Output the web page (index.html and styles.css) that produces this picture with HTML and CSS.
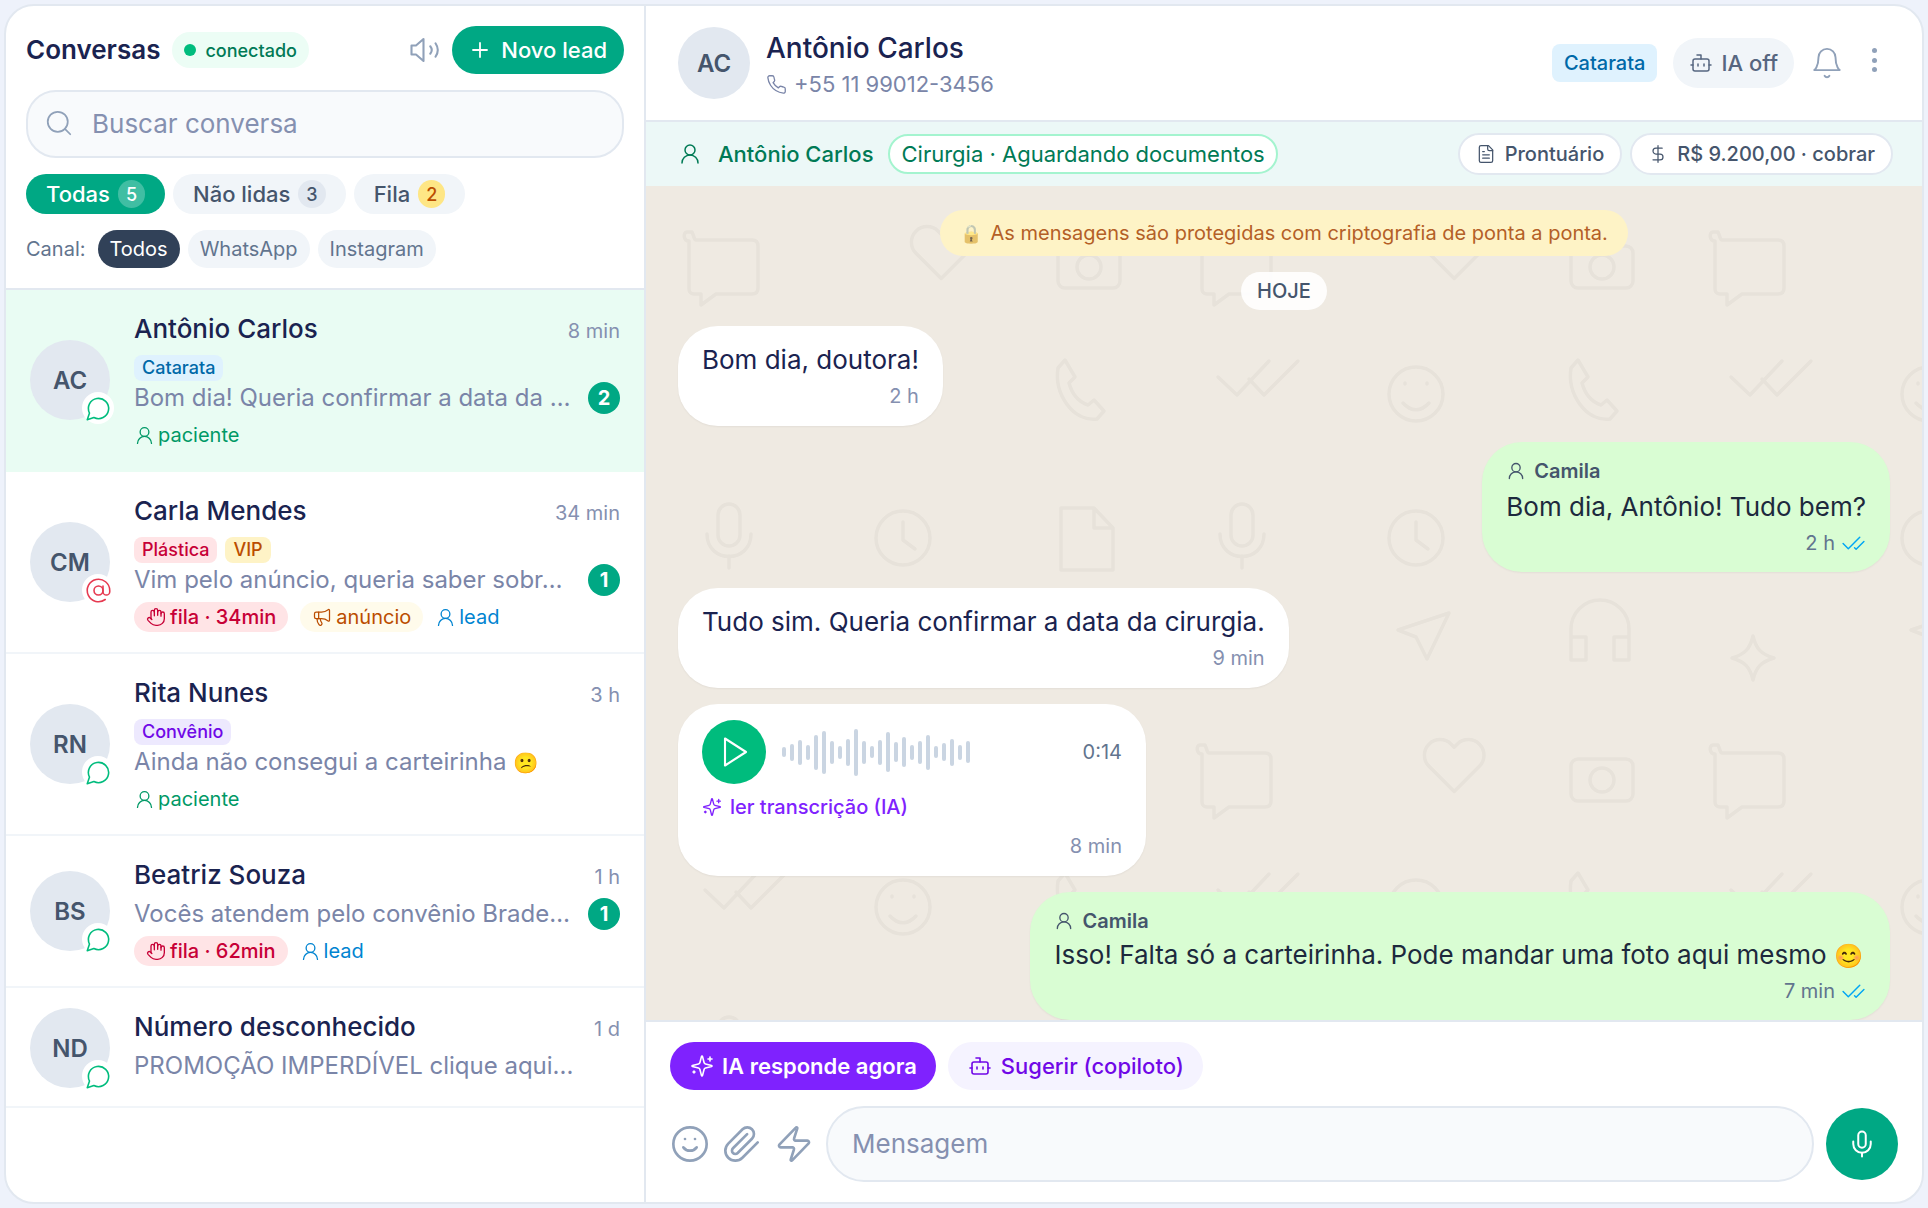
FILE: index.html
```html
<!DOCTYPE html>
<html lang="pt-BR">
<head>
<meta charset="utf-8">
<title>Conversas</title>
<link rel="stylesheet" href="styles.css">
</head>
<body>
<svg class="defs" width="0" height="0" aria-hidden="true">
  <defs>
    <symbol id="i-volume" viewBox="0 0 24 24"><path d="M11 4.7 6 9H3v6h3l5 4.3z"/><path d="M15.5 9.5a4 4 0 0 1 0 5"/><path d="M19 7.5a8 8 0 0 1 0 9"/></symbol>
    <symbol id="i-plus" viewBox="0 0 24 24"><path d="M5 12h14"/><path d="M12 5v14"/></symbol>
    <symbol id="i-search" viewBox="0 0 24 24"><circle cx="11" cy="11" r="8"/><path d="m21 21-4.3-4.3"/></symbol>
    <symbol id="i-msg" viewBox="0 0 24 24"><path d="M7.9 20A9 9 0 1 0 4 16.1L2 22Z"/></symbol>
    <symbol id="i-at" viewBox="0 0 24 24"><circle cx="12" cy="12" r="4"/><path d="M16 8v5a3 3 0 0 0 6 0v-1a10 10 0 1 0-4 8"/></symbol>
    <symbol id="i-user" viewBox="0 0 24 24"><circle cx="12" cy="8" r="5"/><path d="M20 21a8 8 0 0 0-16 0"/></symbol>
    <symbol id="i-hand" viewBox="0 0 24 24"><path d="M18 11V6a2 2 0 0 0-2-2a2 2 0 0 0-2 2"/><path d="M14 10V4a2 2 0 0 0-2-2a2 2 0 0 0-2 2v2"/><path d="M10 10.5V6a2 2 0 0 0-2-2a2 2 0 0 0-2 2v8"/><path d="M18 8a2 2 0 1 1 4 0v6a8 8 0 0 1-8 8h-2c-2.8 0-4.5-.86-5.99-2.34l-3.6-3.6a2 2 0 0 1 2.83-2.82L7 15"/></symbol>
    <symbol id="i-mega" viewBox="0 0 24 24"><path d="M11 6a13 13 0 0 0 8.4-2.8A1 1 0 0 1 21 4v12a1 1 0 0 1-1.6.8A13 13 0 0 0 11 14H5a2 2 0 0 1-2-2V8a2 2 0 0 1 2-2z"/><path d="M6 14a12 12 0 0 0 2.4 7.2 2 2 0 0 0 3.2-2.4A8 8 0 0 1 10 14"/><path d="M8 6v8"/></symbol>
    <symbol id="i-phone" viewBox="0 0 24 24"><path d="M22 16.92v3a2 2 0 0 1-2.18 2 19.79 19.79 0 0 1-8.63-3.07 19.5 19.5 0 0 1-6-6 19.79 19.79 0 0 1-3.07-8.67A2 2 0 0 1 4.11 2h3a2 2 0 0 1 2 1.72 12.84 12.84 0 0 0 .7 2.81 2 2 0 0 1-.45 2.11L8.09 9.91a16 16 0 0 0 6 6l1.27-1.27a2 2 0 0 1 2.11-.45 12.84 12.84 0 0 0 2.81.7A2 2 0 0 1 22 16.92z"/></symbol>
    <symbol id="i-bot" viewBox="0 0 24 24"><path d="M12 8V4H8"/><rect width="16" height="12" x="4" y="8" rx="2"/><path d="M2 14h2"/><path d="M20 14h2"/><path d="M15 13v2"/><path d="M9 13v2"/></symbol>
    <symbol id="i-bell" viewBox="0 0 24 24"><path d="M6 8a6 6 0 0 1 12 0c0 7 3 9 3 9H3s3-2 3-9"/><path d="M10.3 21a1.94 1.94 0 0 0 3.4 0"/></symbol>
    <symbol id="i-file" viewBox="0 0 24 24"><path d="M15 2H6a2 2 0 0 0-2 2v16a2 2 0 0 0 2 2h12a2 2 0 0 0 2-2V7Z"/><path d="M14 2v4a2 2 0 0 0 2 2h4"/><path d="M10 9H8"/><path d="M16 13H8"/><path d="M16 17H8"/></symbol>
    <symbol id="i-dollar" viewBox="0 0 24 24"><path d="M12 2v20"/><path d="M17 5H9.5a3.5 3.5 0 0 0 0 7h5a3.5 3.5 0 0 1 0 7H6"/></symbol>
    <symbol id="i-checks" viewBox="0 0 24 24"><path d="M18 6 7 17l-5-5"/><path d="m22 10-7.5 7.5L13 16"/></symbol>
    <symbol id="i-play" viewBox="0 0 24 24"><path d="M6 3l14 9-14 9z"/></symbol>
    <symbol id="i-sparkles" viewBox="0 0 24 24"><path d="M9.937 15.5A2 2 0 0 0 8.5 14.063l-6.135-1.582a.5.5 0 0 1 0-.962L8.5 9.936A2 2 0 0 0 9.937 8.5l1.582-6.135a.5.5 0 0 1 .963 0L14.063 8.5A2 2 0 0 0 15.5 9.937l6.135 1.581a.5.5 0 0 1 0 .964L15.5 14.063a2 2 0 0 0-1.437 1.437l-1.582 6.135a.5.5 0 0 1-.963 0z"/><path d="M20 3v4"/><path d="M22 5h-4"/><path d="M4 17v2"/><path d="M5 18H3"/></symbol>
    <symbol id="i-smile" viewBox="0 0 24 24"><circle cx="12" cy="12" r="10"/><path d="M8 14s1.5 2 4 2 4-2 4-2"/><path d="M9 9h.01"/><path d="M15 9h.01"/></symbol>
    <symbol id="i-clip" viewBox="0 0 24 24"><path d="m21.44 11.05-9.19 9.19a6 6 0 0 1-8.49-8.49l8.57-8.57A4 4 0 1 1 18 8.84l-8.59 8.57a2 2 0 0 1-2.83-2.83l8.49-8.48"/></symbol>
    <symbol id="i-zap" viewBox="0 0 24 24"><path d="M4 14a1 1 0 0 1-.78-1.63l9.9-10.2a.5.5 0 0 1 .86.46l-1.92 6.02A1 1 0 0 0 13 10h7a1 1 0 0 1 .78 1.63l-9.9 10.2a.5.5 0 0 1-.86-.46l1.92-6.02A1 1 0 0 0 11 14z"/></symbol>
    <symbol id="i-mic" viewBox="0 0 24 24"><path d="M12 2a3 3 0 0 0-3 3v7a3 3 0 0 0 6 0V5a3 3 0 0 0-3-3z"/><path d="M19 10v2a7 7 0 0 1-14 0v-2"/><path d="M12 19v3"/></symbol>
  </defs>
</svg>

<div class="app">
  <aside class="sidebar">
    <div class="side-head">
      <div class="title-row">
        <h1 class="title">Conversas</h1>
        <span class="online"><i class="dot"></i>conectado</span>
        <svg class="ico ico-vol"><use href="#i-volume"/></svg>
        <button class="new-lead"><svg class="ico ico-plus"><use href="#i-plus"/></svg>Novo lead</button>
      </div>
      <div class="search"><svg class="ico ico-search"><use href="#i-search"/></svg><span>Buscar conversa</span></div>
      <div class="tabs">
        <span class="tab tab-on">Todas <b class="count count-on">5</b></span>
        <span class="tab">Não lidas <b class="count">3</b></span>
        <span class="tab">Fila <b class="count count-warn">2</b></span>
      </div>
      <div class="channels">
        <span class="ch-label">Canal:</span>
        <span class="ch ch-on">Todos</span>
        <span class="ch">WhatsApp</span>
        <span class="ch">Instagram</span>
      </div>
    </div>

    <div class="conv conv-on">
      <div class="av">AC<span class="chan chan-wa"><svg class="ico"><use href="#i-msg"/></svg></span></div>
      <div class="conv-body">
        <div class="conv-top"><span class="name">Antônio Carlos</span><span class="time">8 min</span></div>
        <div class="tags"><span class="tag tag-sky">Catarata</span></div>
        <div class="prev-row"><span class="prev">Bom dia! Queria confirmar a data da …</span><span class="unread">2</span></div>
        <div class="meta"><span class="who who-pac"><svg class="ico"><use href="#i-user"/></svg>paciente</span></div>
      </div>
    </div>

    <div class="conv">
      <div class="av">CM<span class="chan chan-ig"><svg class="ico"><use href="#i-at"/></svg></span></div>
      <div class="conv-body">
        <div class="conv-top"><span class="name">Carla Mendes</span><span class="time">34 min</span></div>
        <div class="tags"><span class="tag tag-rose">Plástica</span><span class="tag tag-amber">VIP</span></div>
        <div class="prev-row"><span class="prev">Vim pelo anúncio, queria saber sobr…</span><span class="unread">1</span></div>
        <div class="meta">
          <span class="pill pill-rose"><svg class="ico"><use href="#i-hand"/></svg>fila · 34min</span>
          <span class="pill pill-amber"><svg class="ico ico-mega"><use href="#i-mega"/></svg>anúncio</span>
          <span class="who who-lead"><svg class="ico"><use href="#i-user"/></svg>lead</span>
        </div>
      </div>
    </div>

    <div class="conv">
      <div class="av">RN<span class="chan chan-wa"><svg class="ico"><use href="#i-msg"/></svg></span></div>
      <div class="conv-body">
        <div class="conv-top"><span class="name">Rita Nunes</span><span class="time">3 h</span></div>
        <div class="tags"><span class="tag tag-violet">Convênio</span></div>
        <div class="prev-row"><span class="prev">Ainda não consegui a carteirinha <span class="emoji">😕</span></span></div>
        <div class="meta"><span class="who who-pac"><svg class="ico"><use href="#i-user"/></svg>paciente</span></div>
      </div>
    </div>

    <div class="conv">
      <div class="av">BS<span class="chan chan-wa"><svg class="ico"><use href="#i-msg"/></svg></span></div>
      <div class="conv-body">
        <div class="conv-top"><span class="name">Beatriz Souza</span><span class="time">1 h</span></div>
        <div class="prev-row"><span class="prev">Vocês atendem pelo convênio Brade…</span><span class="unread">1</span></div>
        <div class="meta">
          <span class="pill pill-rose"><svg class="ico"><use href="#i-hand"/></svg>fila · 62min</span>
          <span class="who who-lead"><svg class="ico"><use href="#i-user"/></svg>lead</span>
        </div>
      </div>
    </div>

    <div class="conv">
      <div class="av">ND<span class="chan chan-wa"><svg class="ico"><use href="#i-msg"/></svg></span></div>
      <div class="conv-body">
        <div class="conv-top"><span class="name">Número desconhecido</span><span class="time">1 d</span></div>
        <div class="prev-row"><span class="prev">PROMOÇÃO IMPERDÍVEL clique aqui...</span></div>
      </div>
    </div>
  </aside>

  <main class="main">
    <header class="chat-head">
      <div class="av av-head">AC</div>
      <div class="head-info">
        <div class="head-name">Antônio Carlos</div>
        <div class="head-phone"><svg class="ico"><use href="#i-phone"/></svg>+55 11 99012-3456</div>
      </div>
      <span class="head-tag">Catarata</span>
      <span class="ia-off"><svg class="ico"><use href="#i-bot"/></svg>IA off</span>
      <svg class="ico ico-bell"><use href="#i-bell"/></svg>
      <span class="kebab"><i></i><i></i><i></i></span>
    </header>

    <div class="banner">
      <svg class="ico ico-banner"><use href="#i-user"/></svg>
      <span class="ban-name">Antônio Carlos</span>
      <span class="ban-stage">Cirurgia · Aguardando documentos</span>
      <span class="ban-btn ban-first"><svg class="ico"><use href="#i-file"/></svg>Prontuário</span>
      <span class="ban-btn"><svg class="ico"><use href="#i-dollar"/></svg>R$ 9.200,00 · cobrar</span>
    </div>

    <section class="chat">
      <div class="notice"><span class="lock">🔒</span>As mensagens são protegidas com criptografia de ponta a ponta.</div>
      <div class="day">HOJE</div>

      <div class="msg msg-in">
        <div class="msg-text">Bom dia, doutora!</div>
        <div class="msg-time">2 h</div>
      </div>

      <div class="msg msg-out">
        <div class="msg-from"><svg class="ico"><use href="#i-user"/></svg>Camila</div>
        <div class="msg-text">Bom dia, Antônio! Tudo bem?</div>
        <div class="msg-time">2 h<svg class="ico ico-checks"><use href="#i-checks"/></svg></div>
      </div>

      <div class="msg msg-in">
        <div class="msg-text">Tudo sim. Queria confirmar a data da cirurgia.</div>
        <div class="msg-time">9 min</div>
      </div>

      <div class="msg msg-in msg-audio">
        <div class="audio">
          <span class="play"><svg class="ico"><use href="#i-play"/></svg></span>
          <div class="wave">
            <i style="height:10px"></i><i style="height:17px"></i><i style="height:25px"></i><i style="height:15px"></i><i style="height:35px"></i><i style="height:43px"></i><i style="height:23px"></i><i style="height:13px"></i><i style="height:27px"></i><i style="height:47px"></i><i style="height:23px"></i><i style="height:12px"></i><i style="height:25px"></i><i style="height:40px"></i><i style="height:20px"></i><i style="height:30px"></i><i style="height:15px"></i><i style="height:23px"></i><i style="height:35px"></i><i style="height:12px"></i><i style="height:18px"></i><i style="height:27px"></i><i style="height:15px"></i><i style="height:22px"></i>
          </div>
          <span class="dur">0:14</span>
        </div>
        <div class="transcr"><svg class="ico"><use href="#i-sparkles"/></svg>ler transcrição (IA)</div>
        <div class="msg-time">8 min</div>
      </div>

      <div class="msg msg-out msg-tight">
        <div class="msg-from"><svg class="ico"><use href="#i-user"/></svg>Camila</div>
        <div class="msg-text">Isso! Falta só a carteirinha. Pode mandar uma foto aqui mesmo <span class="emoji">😊</span></div>
        <div class="msg-time">7 min<svg class="ico ico-checks"><use href="#i-checks"/></svg></div>
      </div>
    </section>

    <footer class="composer">
      <div class="ai-row">
        <button class="ai-now"><svg class="ico"><use href="#i-sparkles"/></svg>IA responde agora</button>
        <button class="ai-sug"><svg class="ico"><use href="#i-bot"/></svg>Sugerir (copiloto)</button>
      </div>
      <div class="input-row">
        <svg class="ico ico-tool"><use href="#i-smile"/></svg>
        <svg class="ico ico-tool"><use href="#i-clip"/></svg>
        <svg class="ico ico-tool"><use href="#i-zap"/></svg>
        <div class="input">Mensagem</div>
        <span class="send"><svg class="ico"><use href="#i-mic"/></svg></span>
      </div>
    </footer>
  </main>
</div>
</body>
</html>
```
FILE: styles.css
```css
* { box-sizing: border-box; }
html, body { margin: 0; height: 100%; }
body {
  background: #eef2fb;
  padding: 4px;
  font-family: Inter, "Noto Sans", "Noto Color Emoji", sans-serif;
  color: #1a2350;
}
.defs { position: absolute; }
.ico {
  display: block;
  flex: none;
  fill: none;
  stroke: currentColor;
  stroke-width: 2;
  stroke-linecap: round;
  stroke-linejoin: round;
}
button { font: inherit; border: 0; }
.emoji { font-size: .85em; line-height: 1; filter: sepia(.2) saturate(1.3); }
.msg-text .emoji { font-size: .9em; margin-right: 3px; }

.app {
  display: flex;
  width: 1920px;
  height: 1200px;
  background: #fff;
  border: 2px solid #e2e8f0;
  border-radius: 30px;
  overflow: hidden;
}

/* Sidebar */
.sidebar { width: 640px; flex: none; border-right: 2px solid #e2e8f0; }
.side-head { padding: 20px 20px 20px; border-bottom: 2px solid #e2e8f0; height: 284px; }
.title-row { display: flex; align-items: center; height: 48px; }
.title { margin: 0; font-size: 26px; font-weight: 600; line-height: 1; }
.online {
  display: flex; align-items: center; gap: 9px;
  height: 36px; padding: 0 12px; margin-left: 12px;
  background: #ecfdf5; color: #007a55;
  border-radius: 18px; font-size: 18px; font-weight: 500;
}
.dot { width: 12px; height: 12px; border-radius: 50%; background: #00bc7d; }
.ico-vol { width: 36px; height: 36px; margin-left: auto; margin-right: 9px; color: #90a1b9; stroke-width: 1.4; }
.new-lead {
  display: flex; align-items: center; gap: 9px;
  height: 48px; padding: 0 17px 0 16px;
  background: #00a884; color: #fff;
  border-radius: 24px; font-size: 22px; font-weight: 500;
}
.ico-plus { width: 24px; height: 24px; stroke-width: 1.8; }
.search {
  display: flex; align-items: center; gap: 18px;
  height: 68px; margin-top: 16px; padding: 0 16px 2px;
  background: #f8fafc; border: 2px solid #e2e8f0; border-radius: 30px;
  font-size: 26px; color: #8590b0;
}
.ico-search { width: 30px; height: 30px; color: #90a1b9; stroke-width: 1.4; }
.tabs { display: flex; gap: 8px; margin-top: 16px; }
.tab {
  display: flex; align-items: center; gap: 8px;
  height: 40px; padding: 0 20px;
  background: #f1f5f9; color: #45556c;
  border-radius: 20px; font-size: 22px; font-weight: 500;
}
.tab-on { background: #00a884; color: #fff; }
.count {
  display: flex; align-items: center; justify-content: center;
  height: 28px; padding: 0 8px; border-radius: 14px;
  background: #e2e8f0; color: #45556c;
  font-size: 18px; font-weight: 500;
}
.count-on { background: rgba(255,255,255,.25); color: #fff; }
.count-warn { background: #fee685; color: #bb4d00; }
.channels { display: flex; align-items: center; gap: 8px; margin-top: 16px; }
.ch-label { font-size: 20px; color: #62748e; margin-right: 4px; }
.ch {
  display: flex; align-items: center;
  height: 38px; padding: 0 12px;
  background: #f1f5f9; color: #62748e;
  border-radius: 19px; font-size: 20px;
}
.ch-on { background: #314158; color: #fff; }

/* Conversation rows */
.conv {
  display: flex; align-items: flex-start; gap: 24px;
  padding: 20px 24px 20px 24px;
  border-bottom: 2px solid #f1f5f9;
}
.conv:last-child { padding-bottom: 18px; }
.conv-on { background: #e9fcf3; border-bottom-color: #e9fcf3; }
.av {
  position: relative; flex: none; align-self: center;
  display: flex; align-items: center; justify-content: center;
  width: 80px; height: 80px; border-radius: 50%;
  background: #e2e8f0; color: #45556c;
  font-size: 24px; font-weight: 600;
}
.chan {
  position: absolute; right: -4px; bottom: -4px;
  display: flex; align-items: center; justify-content: center;
  width: 32px; height: 32px; border-radius: 50%; background: #fff;
}
.chan .ico { width: 27px; height: 27px; stroke-width: 1.4; }
.chan-wa { color: #00bc7d; }
.chan-ig { color: #e63950; }
.conv-body { flex: 1; min-width: 0; margin-top: -1px; }
.conv-top { display: flex; justify-content: space-between; align-items: center; height: 38px; }
.name { font-size: 26px; font-weight: 500; color: #1a2350; }
.time { font-size: 20px; color: #8590b0; padding-top: 6px; }
.tags { display: flex; gap: 8px; margin-top: 8px; }
.tag { display: block; height: 26px; line-height: 26px; padding: 0 8px; border-radius: 8px; font-size: 18px; font-weight: 500; }
.tag-sky { background: #dff2fe; color: #0069a8; }
.tag-rose { background: #ffe4e6; color: #c70036; }
.tag-amber { background: #fef3c6; color: #bb4d00; }
.tag-violet { background: #ede9fe; color: #7008e7; }
.prev-row { display: flex; align-items: center; justify-content: space-between; height: 36px; margin-top: -2px; }
.conv-top + .prev-row { margin-top: 2px; }
.prev { white-space: nowrap; font-size: 24px; color: #7a85a8; }
.unread {
  display: flex; align-items: center; justify-content: center; flex: none;
  width: 32px; height: 32px; margin-top: 2px; border-radius: 50%;
  background: #00a884; color: #fff; font-size: 20px; font-weight: 700;
}
.meta { display: flex; align-items: center; gap: 12px; height: 30px; margin-top: 5px; font-size: 20px; }
.who { display: flex; align-items: center; gap: 3px; }
.who .ico { width: 21px; height: 21px; stroke-width: 1.5; }
.who-pac { color: #009966; }
.who-lead { color: #0084d1; }
.pill { display: flex; align-items: center; gap: 4px; height: 30px; padding: 0 12px; border-radius: 15px; font-weight: 500; }
.pill .ico { width: 20px; height: 20px; stroke-width: 1.6; }
.pill-rose { background: #ffe4e6; color: #c70036; }
.pill-amber { background: #fffbeb; color: #bb4d00; font-weight: 400; }
.pill .ico-mega { width: 20px; height: 20px; stroke-width: 1.5; }

/* Main */
.main { flex: 1; min-width: 0; display: flex; flex-direction: column; }
.chat-head {
  display: flex; align-items: center; flex: none;
  height: 116px; padding: 0 45px 0 32px;
  border-bottom: 2px solid #e2e8f0;
}
.av-head { width: 72px; height: 72px; }
.head-info { margin-left: 16px; flex: 1; }
.head-name { font-size: 28px; font-weight: 500; line-height: 40px; padding-top: 1px; color: #1a2350; }
.head-phone { display: flex; align-items: center; gap: 7px; font-size: 22px; line-height: 30px; padding-top: 1px; color: #7a85a8; }
.head-phone .ico { width: 21px; height: 21px; stroke-width: 1.5; }
.head-tag { height: 38px; line-height: 38px; padding: 0 12px; background: #dff2fe; color: #0069a8; border-radius: 8px; font-size: 20px; font-weight: 500; }
.ia-off {
  display: flex; align-items: center; gap: 8px;
  height: 50px; padding: 0 16px; margin-left: 16px;
  background: #f1f5f9; color: #566680; border-radius: 25px; font-size: 22px; font-weight: 500;
}
.ia-off .ico { width: 24px; height: 24px; stroke-width: 1.5; }
.ico-bell { width: 34px; height: 34px; margin-left: 16px; color: #90a1b9; stroke-width: 1.35; }
.kebab { display: flex; flex-direction: column; gap: 4.5px; margin-left: 28px; margin-top: -6px; }
.kebab i { width: 5px; height: 5px; border-radius: 50%; background: #90a1b9; }

.banner {
  display: flex; align-items: center; flex: none;
  height: 64px; padding: 0 29px 0 32px;
  background: #ecf8f7;
}
.ico-banner { width: 24px; height: 24px; color: #007a55; stroke-width: 1.5; }
.ban-name { margin-left: 16px; font-size: 22px; font-weight: 500; color: #007a55; }
.ban-stage {
  display: flex; align-items: center;
  height: 40px; margin-left: 15px; padding: 0 11px;
  background: #fff; border: 2px solid #a4f4cf; border-radius: 20px;
  font-size: 22px; color: #007a55;
}
.ban-btn {
  display: flex; align-items: center; gap: 9px;
  height: 42px; padding: 0 16px; margin-left: 8px;
  background: #fff; border: 2px solid #e2e8f0; border-radius: 21px;
  font-size: 20px; font-weight: 500; color: #45556c;
}
.ban-btn .ico { width: 20px; height: 20px; stroke-width: 1.5; }
.ban-first { margin-left: auto; }

.chat {
  flex: 1; min-height: 0; overflow: hidden;
  display: flex; flex-direction: column; gap: 16px;
  padding: 24px 32px;
  background-color: #efeae2;
  background-image: url("data:image/svg+xml,%3Csvg xmlns='http://www.w3.org/2000/svg' width='513' height='513' fill='none' stroke='%23e7e2da' stroke-width='3.5' stroke-linecap='round' stroke-linejoin='round'%3E%3Cpath d='M46 46h-5c-4 0-4 9 2 9v48c0 3 2 5 5 5h7v11l15-11h36c4 0 6-2 6-6V60c0-4-2-6-6-6H50c-2 0-2-4-4-8z'/%3E%3Cpath transform='translate(261 32) scale(2.85)' stroke-width='1.23' d='M20.84 4.61a5.5 5.5 0 0 0-7.78 0L12 5.67l-1.06-1.06a5.5 5.5 0 0 0-7.78 7.78l1.06 1.06L12 21.23l7.78-7.78 1.06-1.06a5.5 5.5 0 0 0 0-7.78z'/%3E%3Crect x='412' y='60' width='62' height='42' rx='7'/%3E%3Ccircle cx='443' cy='81' r='12'/%3E%3Cpath d='M59 191l19 18 32-34M90 193l15 16 34-34'/%3E%3Ccircle cx='257' cy='208' r='27'/%3E%3Cpath d='M244 217c8 9 18 9 26 0M246 197v1M268 197v1'/%3E%3Cpath d='M412 182l7-8 10 17-6 6c3 11 10 19 19 22l6-5 10 11-7 8c-24 3-43-25-39-51z'/%3E%3Crect x='72' y='318' width='22' height='42' rx='11'/%3E%3Cpath d='M61 348c0 30 44 30 44 0M83 370v12'/%3E%3Ccircle cx='257' cy='352' r='27'/%3E%3Cpath d='M257 336v18l12 9'/%3E%3Cpath d='M415 322h33l19 20v42h-52zM448 322v20h19'/%3E%3Cpath d='M239 444l51-17-22 46-11-22z'/%3E%3Cpath d='M412 460v-17a29 29 0 0 1 58 0v17M412 451h15v23h-15zM455 451h15v23h-15z'/%3E%3Cpath d='M81 450c3 13 8 18 21 22-13 4-18 9-21 22-3-13-8-18-21-22 13-4 18-9 21-22z'/%3E%3C/svg%3E");
  background-size: 513px 513px;
}
.notice {
  align-self: center; flex: none;
  display: flex; align-items: center; gap: 8px;
  height: 46px; padding: 0 20px 0 20px;
  background: #fef3c6; color: #b45f27; border-radius: 23px;
  font-size: 20px;
}
.lock { font-size: 18px; opacity: .8; filter: sepia(.5); }
.day {
  align-self: center; flex: none;
  display: flex; align-items: center;
  height: 38px; padding: 0 16px;
  background: rgba(255,255,255,.9); color: #45556c;
  border-radius: 19px; font-size: 20px; font-weight: 500;
}
.msg {
  flex: none; max-width: 880px;
  padding: 16px 24px 16px;
  border-radius: 40px;
  box-shadow: 0 1px 2px rgba(0,0,0,.05);
}
.msg-in { align-self: flex-start; background: #fff; }
.msg-out { align-self: flex-end; background: #d9fdd3; padding-bottom: 15px; }
.msg-text { font-size: 26px; line-height: 36px; color: #1a2350; }
.msg-out .msg-text { color: #1d293d; }
.msg-time {
  display: flex; align-items: center; justify-content: flex-end; gap: 6px;
  height: 28px; margin-top: 4px; font-size: 20px; color: #8590b0;
}
.msg-out .msg-time { color: #62748e; }
.ico-checks { width: 25px; height: 25px; color: #00a6f4; stroke-width: 1.4; }
.msg-from { display: flex; align-items: center; gap: 8px; height: 26px; margin-bottom: 5px; font-size: 20px; font-weight: 600; color: #45556c; }
.msg-from .ico { width: 20px; height: 20px; stroke-width: 1.6; }
.msg-tight .msg-from { margin-bottom: 3px; }
.msg-audio { width: 468px; }
.msg-audio .msg-time { margin-top: 10px; }
.audio { display: flex; align-items: center; }
.play { display: flex; align-items: center; justify-content: center; width: 64px; height: 64px; border-radius: 50%; background: #00bc7d; color: #fff; }
.play .ico { width: 36px; height: 36px; stroke-width: 1.4; }
.wave { display: flex; align-items: center; gap: 4px; margin-left: 16px; }
.wave i { display: block; width: 4px; border-radius: 2px; background: #cad5e2; }
.dur { margin-left: auto; font-size: 20px; color: #62748e; }
.transcr { display: flex; align-items: center; gap: 8px; margin-top: 8px; height: 30px; font-size: 20px; font-weight: 500; color: #7f22fe; }
.transcr .ico { width: 20px; height: 20px; stroke-width: 1.6; }

.composer { flex: none; height: 182px; border-top: 2px solid #e2e8f0; padding: 20px 24px 0 24px; }
.ai-row { display: flex; gap: 12px; }
.ai-now, .ai-sug {
  display: flex; align-items: center; gap: 8px;
  height: 48px; padding: 0 19px 0 20px; border-radius: 24px;
  font-size: 22px; font-weight: 600;
}
.ai-now { background: #7f22fe; color: #fff; }
.ai-sug { background: #f5f3ff; color: #7008e7; font-weight: 500; gap: 9px; }
.ai-now .ico, .ai-sug .ico { width: 24px; height: 24px; stroke-width: 1.6; }
.input-row { display: flex; align-items: center; margin-top: 16px; }
.ico-tool { width: 40px; height: 40px; color: #90a1b9; stroke-width: 1.6; margin-right: 12px; }
.input {
  flex: 1; display: flex; align-items: center;
  height: 76px; padding: 0 24px 2px;
  background: #f8fafc; border: 2px solid #e2e8f0; border-radius: 38px;
  font-size: 26px; color: #8590b0;
}
.send { display: flex; align-items: center; justify-content: center; flex: none; width: 72px; height: 72px; margin-left: 12px; border-radius: 50%; background: #00a884; color: #fff; }
.send .ico { width: 30px; height: 30px; stroke-width: 1.6; }
```
